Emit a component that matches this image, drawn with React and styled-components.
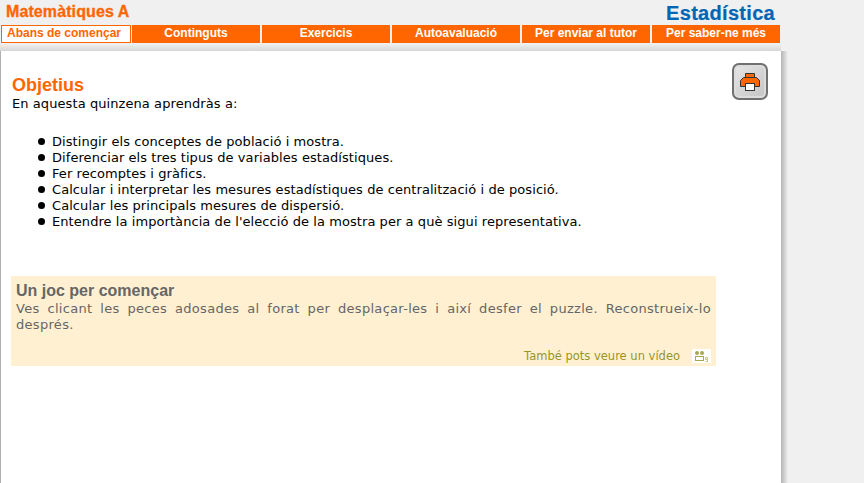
import React from 'react';
import styled, { createGlobalStyle } from 'styled-components';

const GlobalStyle = createGlobalStyle`
  html, body {
    margin: 0;
    height: 100%;
    overflow: hidden;
    background: #f0f0f0;
  }
`;

const Page = styled.div`
  width: 864px;
  height: 483px;
  overflow: hidden;
  font-family: "DejaVu Sans", sans-serif;
`;

const Header = styled.header`
  width: 780px;
  height: 25px;
  margin-left: 1px;
  display: flex;
  justify-content: space-between;
  align-items: flex-start;
`;

const Subject = styled.div`
  font-family: "Liberation Sans", sans-serif;
  font-weight: bold;
  font-size: 16px;
  line-height: 20px;
  margin: 2px 0 0 5px;
  color: #ff6600;
  letter-spacing: 0.1px;
  -webkit-text-stroke: 0.3px #ff6600;
`;

const Topic = styled.div`
  font-family: "Liberation Sans", sans-serif;
  font-weight: bold;
  font-size: 20px;
  line-height: 22px;
  margin: 2px 6px 0 0;
  letter-spacing: 0.3px;
  color: #0066b3;
  -webkit-text-stroke: 0.2px #0066b3;
`;

const Tabs = styled.nav`
  display: flex;
  gap: 2px;
  width: 780px;
  margin-left: 1px;
`;

const Tab = styled.div`
  width: ${(p) => (p.$active ? 130 : 128)}px;
  height: 18px;
  box-sizing: border-box;
  text-align: center;
  font-family: "Liberation Sans", sans-serif;
  font-weight: bold;
  font-size: 12px;
  line-height: ${(p) => (p.$active ? 15 : 17)}px;
  margin-right: ${(p) => (p.$active ? -1 : 0)}px;
  padding-right: ${(p) => (p.$active ? 4 : 0)}px;
  background: ${(p) => (p.$active ? '#fff' : '#ff6600')};
  color: ${(p) => (p.$active ? '#ff6600' : '#fff')};
  border: ${(p) => (p.$active ? '1px solid #ff6600' : 'none')};
`;

const TopShade = styled.div`
  width: 781px;
  height: 7px;
  margin-top: 1px;
  background: linear-gradient(#f0f0f0, #d6d6d6);
`;

const Panel = styled.main`
  position: relative;
  width: 781px;
  height: 432px;
  box-sizing: border-box;
  background: #fff;
  border-left: 1px solid #b0b0b0;
  padding: 25px 0 0 10px;

  &::after {
    content: '';
    position: absolute;
    top: 0;
    bottom: 0;
    left: 100%;
    width: 7px;
    background: linear-gradient(to right, #b4b4b4, #f0f0f0);
  }
`;

const PrintButton = styled.div`
  position: absolute;
  top: 12px;
  right: 13px;
  width: 36px;
  height: 37px;
  box-sizing: border-box;
  border: 2px solid #707070;
  border-radius: 7px;
  background: linear-gradient(135deg, #e6e6e6, #c4c4c4);
  box-shadow: inset 0 0 0 2px #dcdcdc;
  display: flex;
  align-items: center;
  justify-content: center;
`;

const Title = styled.h1`
  margin: 0 0 2px 1px;
  font-family: "Liberation Sans", sans-serif;
  font-weight: bold;
  font-size: 18px;
  line-height: 18px;
  color: #ff6600;
`;

const Text = styled.p`
  margin: 0 0 0 1px;
  font-size: 13px;
  line-height: 15px;
  letter-spacing: 0.08px;
  color: #000;
`;

const Goals = styled.ul`
  margin: 23px 0 0;
  padding: 0 0 0 41px;
  list-style: none;
  font-size: 13px;
  line-height: 16px;
  letter-spacing: 0.07px;
  color: #000;
`;

const Goal = styled.li`
  position: relative;

  &::before {
    content: '';
    position: absolute;
    left: -14px;
    top: 4px;
    width: 7px;
    height: 7px;
    border-radius: 50%;
    background: #000;
  }
`;

const Game = styled.section`
  width: 705px;
  height: 90px;
  margin-top: 46px;
  box-sizing: border-box;
  background: #fff0d2;
  padding: 6px 5px 0;
  position: relative;
  color: #666;
`;

const GameTitle = styled.h2`
  margin: 0 0 1px;
  font-family: "Liberation Sans", sans-serif;
  font-weight: bold;
  font-size: 16px;
  line-height: 18px;
  color: #666;
`;

const GameText = styled.p`
  margin: 0;
  font-size: 13px;
  line-height: 16px;
  letter-spacing: 0.3px;
`;

const JustifiedLine = styled.span`
  display: block;
  text-align: justify;
  text-align-last: justify;
`;

const VideoRow = styled.div`
  position: absolute;
  right: 5px;
  bottom: 2px;
  display: flex;
  align-items: center;
  gap: 12px;
  font-size: 11.5px;
  line-height: 16px;
  color: #969628;
`;

const VideoIcon = styled.span`
  display: flex;
  width: 19px;
  height: 14px;
  background: #fff;
  align-items: center;
  justify-content: center;
`;

const goals = [
  'Distingir els conceptes de població i mostra.',
  'Diferenciar els tres tipus de variables estadístiques.',
  'Fer recomptes i gràfics.',
  'Calcular i interpretar les mesures estadístiques de centralització i de posició.',
  'Calcular les principals mesures de dispersió.',
  "Entendre la importància de l'elecció de la mostra per a què sigui representativa.",
];

const tabs = ['Continguts', 'Exercicis', 'Autoavaluació', 'Per enviar al tutor', 'Per saber-ne més'];

export default function App() {
  return (
    <Page>
      <GlobalStyle />
      <Header>
        <Subject>Matemàtiques A</Subject>
        <Topic>Estadística</Topic>
      </Header>
      <Tabs>
        <Tab $active>Abans de començar</Tab>
        {tabs.map((t) => <Tab key={t}>{t}</Tab>)}
      </Tabs>
      <TopShade />
      <Panel>
        <PrintButton>
          <svg width="22" height="20" viewBox="0 0 22 20">
            <path d="M6.5 5.5V1.5h9v4" fill="#ff6600" stroke="#333" />
            <path d="M1.5 14.5V8.5l3-3h13l3 3v6z" fill="#ff6600" stroke="#333" />
            <rect x="6.5" y="11.5" width="9" height="7" fill="#fff" stroke="#333" />
          </svg>
        </PrintButton>
        <Title>Objetius</Title>
        <Text>En aquesta quinzena aprendràs a:</Text>
        <Goals>
          {goals.map((g) => <Goal key={g}>{g}</Goal>)}
        </Goals>
        <Game>
          <GameTitle>Un joc per començar</GameTitle>
          <GameText>
            <JustifiedLine>Ves clicant les peces adosades al forat per desplaçar-les i així desfer el puzzle. Reconstrueix-lo</JustifiedLine>
            després.
          </GameText>
          <VideoRow>
            També pots veure un vídeo
            <VideoIcon>
              <svg width="15" height="11" viewBox="0 0 15 11">
                <circle cx="3" cy="2" r="2" fill="#a8a850" />
                <circle cx="8" cy="2" r="2" fill="#a8a850" />
                <rect x="1.5" y="5.5" width="8" height="4" fill="none" stroke="#a8a850" />
                <path d="M11.5 6.5h2v2h-2zM13.5 8.5v2h-2" fill="none" stroke="#c4c480" />
              </svg>
            </VideoIcon>
          </VideoRow>
        </Game>
      </Panel>
    </Page>
  );
}
